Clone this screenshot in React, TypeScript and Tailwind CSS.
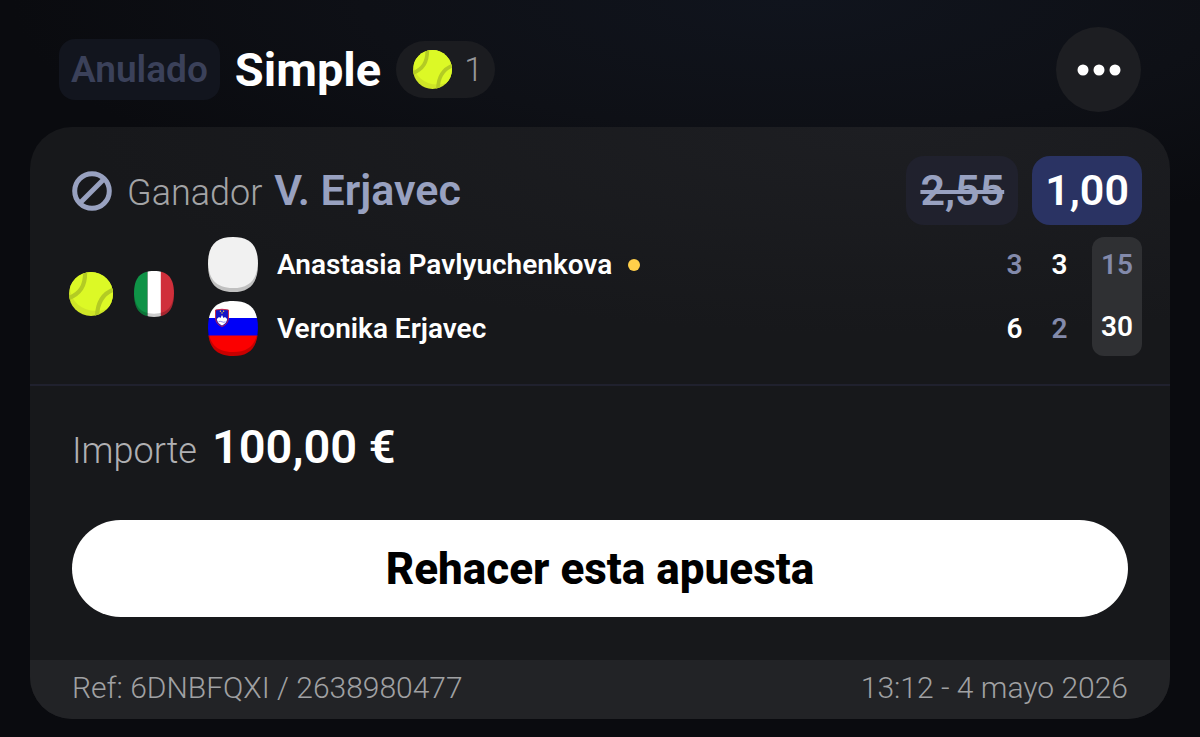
import React from "react";

const SQUIRCLE = "M25 0C42 0 50 8 50 27C50 46 42 55 25 55C8 55 0 46 0 27C0 8 8 0 25 0Z";
const SQUIRCLE_TOP = "M25 -3C42 -3 50 4 50 23C50 42 42 51 25 51C8 51 0 42 0 23C0 4 8 -3 25 -3Z";

function TennisBall({ id, className }: { id: string; className: string }) {
  return (
    <svg viewBox="0 0 44 44" className={className} aria-hidden="true">
      <clipPath id={id}>
        <circle cx="22" cy="22" r="22" />
      </clipPath>
      <g clipPath={`url(#${id})`}>
        <rect width="44" height="44" fill="#cfe627" />
        <ellipse cx="27" cy="16" rx="26" ry="23" fill="#dcf926" />
        <path d="M16 -2C17 14 11 22 -2 27" fill="none" stroke="#b3cb24" strokeWidth="4.2" />
        <path d="M46 17C34 21 28 30 28 46" fill="none" stroke="#b3cb24" strokeWidth="4.2" />
      </g>
    </svg>
  );
}

function Flag({ id, label, className, children }: { id: string; label: string; className: string; children: React.ReactNode }) {
  return (
    <svg viewBox="0 0 50 55" preserveAspectRatio="none" className={className} role="img" aria-label={label}>
      <clipPath id={id}>
        <path d={SQUIRCLE} />
      </clipPath>
      <g clipPath={`url(#${id})`}>
        {children}
        <path d={`M-5 -5H55V60H-5Z ${SQUIRCLE_TOP}`} fillRule="evenodd" fill="#000" opacity="0.2" />
      </g>
    </svg>
  );
}

const players = [
  {
    name: "Anastasia Pavlyuchenkova",
    serving: true,
    sets: [{ v: "3", won: false }, { v: "3", won: true }],
    points: "15",
    leading: false,
    flag: (
      <Flag id="flag-neutral" label="Neutral" className="h-[55px] w-[50px]">
        <rect width="50" height="55" fill="#f1f1f1" />
      </Flag>
    ),
  },
  {
    name: "Veronika Erjavec",
    serving: false,
    sets: [{ v: "6", won: true }, { v: "2", won: false }],
    points: "30",
    leading: true,
    flag: (
      <Flag id="flag-si" label="Eslovenia" className="h-[55px] w-[50px]">
        <rect width="50" height="17" fill="#fff" />
        <rect y="17" width="50" height="18" fill="#0000f8" />
        <rect y="34.5" width="50" height="21" fill="#fb0000" />
        <path d="M7.500 9Q14 7.500 20.500 9V17Q20 23.500 14 25.500Q8 23.500 7.500 17Z" fill="#1414c8" stroke="#d0203a" strokeWidth="0.900" />
        <path d="M8.800 18L11 16L12.500 17L14 14L15.500 17L17 16L19.200 18Q18.500 22.500 14 24.500Q9.500 22.500 8.800 18Z" fill="#fff" />
        <path d="M10.500 20.800Q12.200 19.900 14 20.800T17.500 20.800" fill="none" stroke="#5a5ae0" strokeWidth="0.700" />
        <g fill="#ffd83b">
          <circle cx="14" cy="12" r="0.700" />
          <circle cx="12.400" cy="10.200" r="0.700" />
          <circle cx="15.600" cy="10.200" r="0.700" />
        </g>
      </Flag>
    ),
  },
];

export default function App() {
  return (
    <main className="min-h-screen bg-[#0a0b0f] bg-[radial-gradient(ellipse_65%_32%_at_66%_0%,#10141d_0%,#0e1016_55%,#0a0b0f_100%)] px-[30px] pt-[27px] pb-[19px] font-['Roboto','Liberation_Sans',sans-serif] text-white">
      <header className="flex items-center justify-between px-[29px]">
        <div className="flex items-center gap-[15px]">
          <span className="flex h-[61px] items-center rounded-2xl bg-[#12151e] px-3 text-[37px] font-semibold text-[#3b415a]">Anulado</span>
          <h1 className="text-[47px] leading-none font-bold">Simple</h1>
          <span className="flex h-[57px] items-center gap-3 rounded-full bg-[#1b1c20] pr-3 pl-[17px]">
            <TennisBall id="ball-small" className="size-[39px]" />
            <span className="text-[34px] font-light text-[#96979a]">1</span>
          </span>
        </div>
        <button type="button" aria-label="Más opciones" className="flex size-[85px] items-center justify-center rounded-full bg-[#1d1e22]">
          <svg viewBox="0 0 44 12" className="h-3 w-11" fill="#fff" aria-hidden="true">
            <circle cx="6" cy="6" r="5.500" />
            <circle cx="22" cy="6" r="5.500" />
            <circle cx="38" cy="6" r="5.500" />
          </svg>
        </button>
      </header>

      <article className="mt-[15px] overflow-hidden rounded-[42px] bg-[#17181b] bg-[radial-gradient(ellipse_70%_35%_at_75%_0%,#1d1e22_0%,#17181b_100%)]">
        <section className="border-b-2 border-[#20212e] pt-[29px] pr-7 pb-[28px] pl-[42px]">
          <div className="flex items-center justify-between">
            <div className="flex items-center">
              <svg viewBox="0 0 40 40" className="size-10" fill="none" stroke="#98a1c0" strokeWidth="5" aria-hidden="true">
                <circle cx="20" cy="20" r="17.300" />
                <path d="M8 32L32 8" />
              </svg>
              <p className="mt-1 ml-[15px] flex items-baseline gap-3">
                <span className="text-[36px] font-light text-[#a3a4a6]">Ganador</span>
                <span className="text-[43px] leading-none font-semibold text-[#98a1c0]">V. Erjavec</span>
              </p>
            </div>
            <div className="flex gap-[14px] text-[43px] font-semibold">
              <s className="flex h-[69px] items-center rounded-[18px] bg-[#20212d] px-[14px] text-[#98a1c0] decoration-4">2,55</s>
              <span className="flex h-[69px] items-center rounded-[18px] bg-[#2a3363] px-[13px]">1,00</span>
            </div>
          </div>

          <div className="-ml-[3px] mt-3 flex items-center">
            <TennisBall id="ball-large" className="mt-[-6px] size-11 shrink-0" />
            <Flag id="flag-it" label="Italia" className="ml-[21px] mt-[-6px] h-[46px] w-10 shrink-0">
              <rect width="17" height="55" fill="#0f9347" />
              <rect x="17" width="17" height="55" fill="#fff" />
              <rect x="33.500" width="17" height="55" fill="#d02f3b" />
            </Flag>
            <table className="ml-[34px] grow border-separate border-spacing-0 text-[28px] leading-none font-semibold">
              <tbody>
                {players.map((p, i) => (
                  <tr key={p.name}>
                    <td className={i === 0 ? "w-[50px] p-0 align-top" : "w-[50px] p-0 align-bottom"}>
                      <div className="flex">{p.flag}</div>
                    </td>
                    <th scope="row" className={i === 0 ? "p-0 pb-1 pl-[19px] text-left font-semibold" : "p-0 pt-1 pl-[19px] text-left font-semibold"}>
                      <span className="flex items-center gap-4">
                        {p.name}
                        {p.serving && <span className="size-3 rounded-full bg-[#ffcf4a]" />}
                      </span>
                    </th>
                    {p.sets.map((s, j) => (
                      <td
                        key={j}
                        className={`w-[45px] p-0 text-center ${i === 0 ? "pb-1" : "pt-1"} ${s.won ? "text-white" : "text-[#838aab]"}`}
                      >
                        {s.v}
                      </td>
                    ))}
                    <td className="w-[60px] p-0 pl-[10px]">
                      <div
                        className={`flex items-center justify-center bg-[#2f3033] ${
                          i === 0 ? "h-[60px] rounded-t-xl pb-1 text-[#838aab]" : "h-[59px] rounded-b-xl text-white"
                        }`}
                      >
                        {p.points}
                      </div>
                    </td>
                  </tr>
                ))}
              </tbody>
            </table>
          </div>
        </section>

        <section className="px-[42px] pt-8 pb-[43px]">
          <p className="flex items-baseline gap-[15px]">
            <span className="text-[36px] font-light text-[#b0b0b3]">Importe</span>
            <span className="text-[47px] leading-[58px] font-semibold">100,00 €</span>
          </p>
          <button type="button" className="mt-[42px] h-[97px] w-full rounded-full bg-white text-[44px] font-extrabold text-black">
            Rehacer esta apuesta
          </button>
        </section>

        <footer className="flex h-[59px] items-center justify-between bg-[#222326] px-[42px] pb-1 text-[30px] font-light text-[#a0a1a3]">
          <span>Ref: 6DNBFQXI / 2638980477</span>
          <time dateTime="2026-05-04T13:12">13:12 - 4 mayo 2026</time>
        </footer>
      </article>
    </main>
  );
}
